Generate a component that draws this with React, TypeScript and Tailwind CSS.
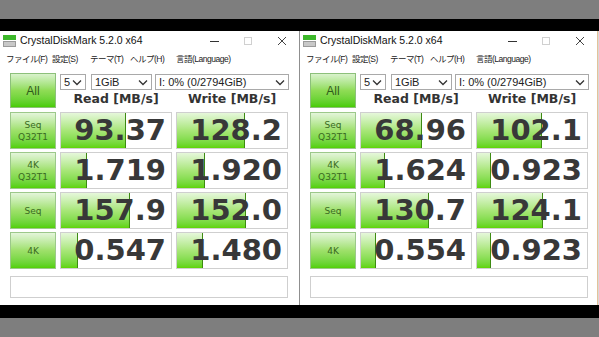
import React from "react";

type Row = { label: string[]; read: string; write: string; rBar: number; wBar: number };

type WindowProps = {
  rows: Row[];
  className?: string;
};

const leftRows: Row[] = [
  { label: ["Seq", "Q32T1"], read: "93.37", write: "128.2", rBar: 0.59, wBar: 0.62 },
  { label: ["4K", "Q32T1"], read: "1.719", write: "1.920", rBar: 0.24, wBar: 0.25 },
  { label: ["Seq"], read: "157.9", write: "152.0", rBar: 0.625, wBar: 0.63 },
  { label: ["4K"], read: "0.547", write: "1.480", rBar: 0.15, wBar: 0.24 },
];

const rightRows: Row[] = [
  { label: ["Seq", "Q32T1"], read: "68.96", write: "102.1", rBar: 0.55, wBar: 0.59 },
  { label: ["4K", "Q32T1"], read: "1.624", write: "0.923", rBar: 0.22, wBar: 0.125 },
  { label: ["Seq"], read: "130.7", write: "124.1", rBar: 0.62, wBar: 0.6 },
  { label: ["4K"], read: "0.554", write: "0.923", rBar: 0.14, wBar: 0.125 },
];

const Chevron = () => (
  <svg width="10" height="7" viewBox="0 0 10 7" className="shrink-0">
    <path d="M1 1.5 L5 5.5 L9 1.5" fill="none" stroke="#333" strokeWidth="1.3" />
  </svg>
);

const Select = ({ text, w }: { text: string; w: string }) => (
  <div className={`${w} h-[16px] border border-[#a9a9a9] bg-white flex items-center justify-between pl-[3px] pr-[3px] text-[11px] text-[#222] leading-none whitespace-nowrap`}>
    <span>{text}</span>
    <Chevron />
  </div>
);

const Cell = ({ value, bar }: { value: string; bar: number }) => (
  <div className="relative w-[112px] h-[37px] border border-[#cfcfcf] bg-white overflow-hidden">
    <div
      className="absolute left-0 top-0 bottom-0 bg-gradient-to-b from-[#e6f7da] via-[#a8e678] to-[#5fd400] border-r border-[#3d8a12]"
      style={{ width: `${bar * 100}%` }}
    />
    <div className="relative h-full flex items-center justify-end pr-[5px] text-[29px] font-bold text-[#383838] leading-none font-['DejaVu_Sans',sans-serif]">
      {value}
    </div>
  </div>
);

const CdmWindow: React.FC<WindowProps> = ({ rows, className }) => (
  <div className={`h-[274px] bg-white flex flex-col font-['Liberation_Sans','Noto_Sans_CJK_JP',sans-serif] ${className ?? ""}`}>
    {/* title bar */}
    <div className="h-[20px] flex items-center">
      <svg width="13" height="12" viewBox="0 0 13 12" className="ml-[3px] mr-[4px]">
        <rect x="0" y="0" width="13" height="5" fill="#3cb82a" />
        <rect x="0" y="6" width="13" height="6" fill="#9a9a9a" />
        <rect x="1" y="7" width="11" height="4" fill="#c8c8c8" />
      </svg>
      <span className="text-[10.5px] text-[#111] whitespace-nowrap">CrystalDiskMark 5.2.0 x64</span>
      <div className="ml-auto flex h-full">
        <div className="w-[34px] flex items-center justify-center">
          <div className="w-[9px] h-px bg-[#333]" />
        </div>
        <div className="w-[34px] flex items-center justify-center">
          <div className="w-[8px] h-[8px] border border-[#d0d0d0]" />
        </div>
        <div className="w-[34px] flex items-center justify-center">
          <svg width="10" height="10" viewBox="0 0 10 10">
            <path d="M1 1 L9 9 M9 1 L1 9" stroke="#444" strokeWidth="1" />
          </svg>
        </div>
      </div>
    </div>
    {/* menu */}
    <div className="h-[16px] flex items-center text-[8.5px] tracking-[-0.5px] text-[#222] pl-[6px] leading-none whitespace-nowrap">
      <span className="w-[46px] shrink-0">ファイル(F)</span>
      <span className="w-[38px] shrink-0">設定(S)</span>
      <span className="w-[40px] shrink-0">テーマ(T)</span>
      <span className="w-[46px] shrink-0">ヘルプ(H)</span>
      <span className="shrink-0">言語(Language)</span>
    </div>
    {/* content */}
    <div className="pl-[10px] pt-[6px] flex flex-col">
      <div className="flex h-[35px] gap-[4px]">
        <div className="w-[46px] h-[35px] border border-[#8cc07a] bg-gradient-to-b from-[#d9f2cc] via-[#8fdc55] to-[#48cc00] flex items-center justify-center text-[12px] text-[#2f5a1c]">
          All
        </div>
        <div className="flex flex-col">
          <div className="flex h-[16px] mt-[1px]">
            <Select text="5" w="w-[26px]" />
            <div className="w-[5px]" />
            <Select text="1GiB" w="w-[61px]" />
            <div className="w-[3px]" />
            <Select text="I: 0% (0/2794GiB)" w="w-[134px]" />
          </div>
          <div className="flex h-[18px] items-center text-[12.5px] font-bold text-[#333] font-['DejaVu_Sans',sans-serif]">
            <div className="w-[112px] text-center">Read [MB/s]</div>
            <div className="w-[4px]" />
            <div className="w-[112px] text-center">Write [MB/s]</div>
          </div>
        </div>
      </div>
      <div className="mt-[4px] flex flex-col gap-[3px]">
        {rows.map((r, i) => (
          <div key={i} className="flex gap-[4px]">
            <div className="w-[46px] h-[37px] border border-[#9cc88a] bg-gradient-to-b from-[#e4f5da] via-[#9ee06a] to-[#52d000] flex flex-col items-center justify-center text-[9px] leading-[12px] text-[#3a6a22] font-['DejaVu_Sans',sans-serif]">
              {r.label.map((l) => (
                <span key={l}>{l}</span>
              ))}
            </div>
            <Cell value={r.read} bar={r.rBar} />
            <Cell value={r.write} bar={r.wBar} />
          </div>
        ))}
      </div>
      <div className="mt-[7px] w-[278px] h-[22px] border border-[#cfcfcf] bg-white" />
    </div>
  </div>
);

export default function App() {
  return (
    <div className="w-[599px] h-[337px] bg-[#7e7e7e] flex flex-col overflow-hidden">
      <div className="h-[19px]" />
      <div className="h-[12px] bg-black" />
      <div className="flex h-[274px]">
        <CdmWindow rows={leftRows} className="w-[299px]" />
        <div className="w-px bg-[#8f8f8f]" />
        <CdmWindow rows={rightRows} className="w-[297px]" />
        <div className="w-px bg-[#e3c39a]" />
        <div className="w-px bg-[#d8d8d8]" />
      </div>
      <div className="h-[13px] bg-black" />
    </div>
  );
}
